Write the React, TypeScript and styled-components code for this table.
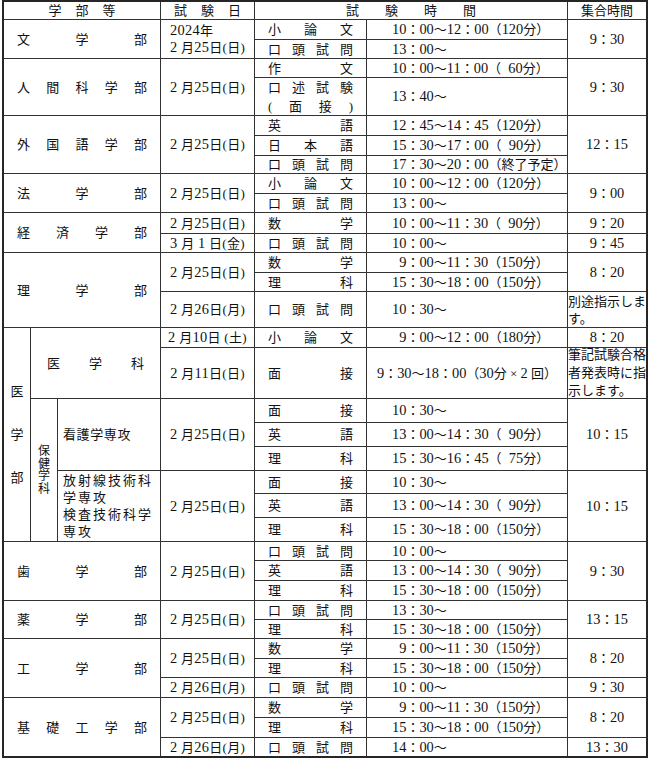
import React from "react";
import styled, { createGlobalStyle } from "styled-components";

const Global = createGlobalStyle`
  html, body { margin: 0; padding: 0; background: #ffffff; }
  body {
    font-family: "Liberation Serif", "Noto Sans CJK JP", serif;
    color: #111111;
    font-size: 13px;
  }
`;

const ROWS = [
  17, 19, 18, 18, 37, 19, 19, 17, 19, 18, 20, 18, 19, 18, 35, 19, 50, 23, 23,
  23, 22, 23, 23, 18, 19, 19, 18, 18, 19, 18, 19, 19, 19, 18,
];

const Sheet = styled.div`
  display: grid;
  width: max-content;
  margin-left: 2px;
  grid-template-columns: 26px 26px 102px 93px 111px 200px 78px;
  grid-template-rows: ${ROWS.map((h) => `${h}px`).join(" ")};
  gap: 1px;
  background: #333333;
  border: 2px solid #262626;
`;

interface Pos {
  $r: number;
  $rs?: number;
  $c: number;
  $cs?: number;
}

const Cell = styled.div<Pos>`
  grid-row: ${(p) => `${p.$r} / span ${p.$rs ?? 1}`};
  grid-column: ${(p) => `${p.$c} / span ${p.$cs ?? 1}`};
  background: #ffffff;
  display: flex;
  align-items: center;
  min-width: 0;
  line-height: 1;
  white-space: nowrap;
`;

const HeadCell = styled(Cell)`
  justify-content: center;
`;

const Spaced = styled.span<{ $ls: number }>`
  letter-spacing: ${(p) => p.$ls}px;
  padding-left: ${(p) => p.$ls}px;
`;

const NameCell = styled(Cell)<{ $pad?: number }>`
  padding: 0 ${(p) => p.$pad ?? 13}px;
`;

const Spread = styled.span`
  display: flex;
  justify-content: space-between;
  width: 100%;
`;

const SubjectCell = styled(Cell)`
  padding: 0 13px;
  flex-direction: column;
  justify-content: center;
  align-items: stretch;
  line-height: 19px;
`;

const DateCell = styled(Cell)`
  justify-content: center;
  letter-spacing: 0.3px;
`;

const TextRun = styled.span`
  white-space: pre;
`;

const DateBlock = styled.span`
  display: block;
  text-align: left;
  line-height: 16px;
  white-space: pre;
`;

const TimeCell = styled(Cell)<{ $center?: boolean }>`
  justify-content: ${(p) => (p.$center ? "center" : "flex-start")};
  padding-left: ${(p) => (p.$center ? 0 : 25)}px;
`;

const GatherCell = styled(Cell)<{ $note?: boolean; $lh?: number }>`
  justify-content: ${(p) => (p.$note ? "flex-start" : "center")};
  line-height: ${(p) => (p.$lh ? `${p.$lh}px` : 1)};
  white-space: ${(p) => (p.$note ? "normal" : "nowrap")};
`;

const VerticalCell = styled(Cell)<{ $gap: number; $lh: number; $fs?: number }>`
  flex-direction: column;
  justify-content: center;
  align-items: center;
  gap: ${(p) => p.$gap}px;
  line-height: ${(p) => p.$lh}px;
  font-size: ${(p) => p.$fs ?? 13}px;
`;

const MajorCell = styled(Cell)<{ $ls?: number; $lh?: number }>`
  padding-left: 5px;
  letter-spacing: ${(p) => p.$ls ?? 0}px;
  line-height: ${(p) => (p.$lh ? `${p.$lh}px` : 1)};
  white-space: normal;
`;

const Num = styled.span`
  font-size: 14.4px;
`;

const Pad = styled(Num)`
  visibility: hidden;
`;

const chars = (s: string) => Array.from(s).map((ch, i) => <span key={i}>{ch}</span>);

const nums = (s: string) =>
  s.split(/(_|\d+)/).map((part, i) => {
    if (part === "_") return <Pad key={i}>0</Pad>;
    if (/^\d+$/.test(part)) return <Num key={i}>{part}</Num>;
    return <React.Fragment key={i}>{part}</React.Fragment>;
  });

const lines = (s: string, fmt: (t: string) => React.ReactNode = (t) => t) =>
  s.split("|").map((l, i, arr) => (
    <React.Fragment key={i}>
      {fmt(l)}
      {i < arr.length - 1 && <br />}
    </React.Fragment>
  ));

const SUBJECTS = [
  "小論文", "口頭試問", "作文", "口述試験|(面接)", "英語", "日本語", "口頭試問", "小論文",
  "口頭試問", "数学", "口頭試問", "数学", "理科", "口頭試問", "小論文", "面接", "面接",
  "英語", "理科", "面接", "英語", "理科", "口頭試問", "英語", "理科", "口頭試問", "理科",
  "数学", "理科", "口頭試問", "数学", "理科", "口頭試問",
];

const TIMES = [
  "10：00～12：00（120分）",
  "13：00～",
  "10：00～11：00（_60分）",
  "13：40～",
  "12：45～14：45（120分）",
  "15：30～17：00（_90分）",
  "17：30～20：00（終了予定）",
  "10：00～12：00（120分）",
  "13：00～",
  "10：00～11：30（_90分）",
  "10：00～",
  "_9：00～11：30（150分）",
  "15：30～18：00（150分）",
  "10：30～",
  "_9：00～12：00（180分）",
  "9：30～18：00（30分 × 2 回）",
  "10：30～",
  "13：00～14：30（_90分）",
  "15：30～16：45（_75分）",
  "10：30～",
  "13：00～14：30（_90分）",
  "15：30～18：00（150分）",
  "10：00～",
  "13：00～14：30（_90分）",
  "15：30～18：00（150分）",
  "13：30～",
  "15：30～18：00（150分）",
  "_9：00～11：30（150分）",
  "15：30～18：00（150分）",
  "10：00～",
  "_9：00～11：30（150分）",
  "15：30～18：00（150分）",
  "14：00～",
];

const D25 = "2 月25日(日)";
const D26 = "2 月26日(月)";

const DATES: { r: number; rs: number; text: string }[] = [
  { r: 4, rs: 2, text: D25 },
  { r: 6, rs: 3, text: D25 },
  { r: 9, rs: 2, text: D25 },
  { r: 11, rs: 1, text: D25 },
  { r: 12, rs: 1, text: "3 月 1 日(金)" },
  { r: 13, rs: 2, text: D25 },
  { r: 15, rs: 1, text: D26 },
  { r: 16, rs: 1, text: "2 月10日 (土)" },
  { r: 17, rs: 1, text: "2 月11日(日)" },
  { r: 18, rs: 3, text: D25 },
  { r: 21, rs: 3, text: D25 },
  { r: 24, rs: 3, text: D25 },
  { r: 27, rs: 2, text: D25 },
  { r: 29, rs: 2, text: D25 },
  { r: 31, rs: 1, text: D26 },
  { r: 32, rs: 2, text: D25 },
  { r: 34, rs: 1, text: D26 },
];

const GATHER: { r: number; rs: number; text: string; note?: boolean; lh?: number }[] = [
  { r: 2, rs: 2, text: "9：30" },
  { r: 4, rs: 2, text: "9：30" },
  { r: 6, rs: 3, text: "12：15" },
  { r: 9, rs: 2, text: "9：00" },
  { r: 11, rs: 1, text: "9：20" },
  { r: 12, rs: 1, text: "9：45" },
  { r: 13, rs: 2, text: "8：20" },
  { r: 15, rs: 1, text: "別途指示しま|す。", note: true, lh: 17 },
  { r: 16, rs: 1, text: "8：20" },
  { r: 17, rs: 1, text: "筆記試験合格|者発表時に指|示します。", note: true, lh: 18 },
  { r: 18, rs: 3, text: "10：15" },
  { r: 21, rs: 3, text: "10：15" },
  { r: 24, rs: 3, text: "9：30" },
  { r: 27, rs: 2, text: "13：15" },
  { r: 29, rs: 2, text: "8：20" },
  { r: 31, rs: 1, text: "9：30" },
  { r: 32, rs: 2, text: "8：20" },
  { r: 34, rs: 1, text: "13：30" },
];

const FACULTIES: { r: number; rs: number; text: string }[] = [
  { r: 2, rs: 2, text: "文学部" },
  { r: 4, rs: 2, text: "人間科学部" },
  { r: 6, rs: 3, text: "外国語学部" },
  { r: 9, rs: 2, text: "法学部" },
  { r: 11, rs: 2, text: "経済学部" },
  { r: 13, rs: 3, text: "理学部" },
  { r: 24, rs: 3, text: "歯学部" },
  { r: 27, rs: 2, text: "薬学部" },
  { r: 29, rs: 3, text: "工学部" },
  { r: 32, rs: 3, text: "基礎工学部" },
];

export default function App() {
  return (
    <>
      <Global />
      <Sheet>
        <HeadCell $r={1} $c={1} $cs={3}>
          <Spaced $ls={14}>学部等</Spaced>
        </HeadCell>
        <HeadCell $r={1} $c={4}>
          <Spaced $ls={14}>試験日</Spaced>
        </HeadCell>
        <HeadCell $r={1} $c={5} $cs={2}>
          <Spaced $ls={26}>試験時間</Spaced>
        </HeadCell>
        <HeadCell $r={1} $c={7}>
          集合時間
        </HeadCell>

        {FACULTIES.map((f) => (
          <NameCell key={f.r} $r={f.r} $rs={f.rs} $c={1} $cs={3}>
            <Spread>{chars(f.text)}</Spread>
          </NameCell>
        ))}

        <VerticalCell $r={16} $rs={8} $c={1} $gap={30} $lh={13}>
          {chars("医学部")}
        </VerticalCell>
        <NameCell $r={16} $rs={2} $c={2} $cs={2} $pad={16}>
          <Spread>{chars("医学科")}</Spread>
        </NameCell>
        <VerticalCell $r={18} $rs={6} $c={2} $gap={0} $lh={12.5} $fs={12}>
          {chars("保健学科")}
        </VerticalCell>
        <MajorCell $r={18} $rs={3} $c={3} $ls={0.6}>
          看護学専攻
        </MajorCell>
        <MajorCell $r={21} $rs={3} $c={3} $ls={2} $lh={17}>
          {lines("放射線技術科|学専攻|検査技術科学|専攻")}
        </MajorCell>

        <DateCell $r={2} $rs={2} $c={4}>
          <DateBlock>{lines("2024年|" + D25, nums)}</DateBlock>
        </DateCell>
        {DATES.map((d) => (
          <DateCell key={d.r} $r={d.r} $rs={d.rs} $c={4}>
            <TextRun>{nums(d.text)}</TextRun>
          </DateCell>
        ))}

        {SUBJECTS.map((s, i) => (
          <SubjectCell key={i} $r={i + 2} $c={5}>
            {s.split("|").map((l, j) => (
              <Spread key={j}>{chars(l)}</Spread>
            ))}
          </SubjectCell>
        ))}

        {TIMES.map((t, i) => (
          <TimeCell key={i} $r={i + 2} $c={6} $center={i + 2 === 17}>
            <TextRun>{nums(t)}</TextRun>
          </TimeCell>
        ))}

        {GATHER.map((g) => (
          <GatherCell key={g.r} $r={g.r} $rs={g.rs} $c={7} $note={g.note} $lh={g.lh}>
            <span>{lines(g.text, nums)}</span>
          </GatherCell>
        ))}
      </Sheet>
    </>
  );
}
